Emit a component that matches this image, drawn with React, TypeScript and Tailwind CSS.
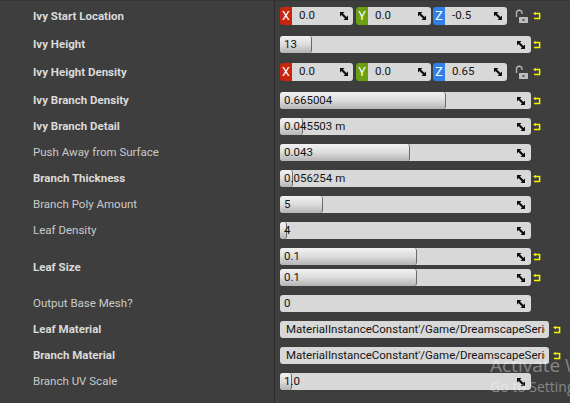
import React from "react";

const FONT = { fontFamily: "Roboto, 'Liberation Sans', sans-serif" };

function Spin() {
  return (
    <svg width="8" height="8" viewBox="0 0 8 8" className="shrink-0">
      <polygon points="0,0 4.5,0 0,4.5" fill="#0e0e0e" />
      <polygon points="8,8 3.5,8 8,3.5" fill="#0e0e0e" />
      <line x1="1" y1="1" x2="7" y2="7" stroke="#0e0e0e" strokeWidth="2.2" />
    </svg>
  );
}

function Reset() {
  return (
    <svg width="8" height="8" viewBox="0 0 8 8" className="shrink-0">
      <polygon points="0,1.5 2.8,-0.2 2.8,3.2" fill="#f5f500" />
      <path d="M2 1.5 H6.6 V6.6 H1" fill="none" stroke="#f5f500" strokeWidth="1.5" />
    </svg>
  );
}

function Lock() {
  return (
    <svg width="14" height="14" viewBox="0 0 14 14" className="shrink-0">
      <path d="M1.5 8 V4 A2.75 2.75 0 0 1 7 4 V5" fill="none" stroke="#bdbdbd" strokeWidth="1.3" />
      <rect x="4" y="8" width="9" height="6" fill="#bdbdbd" rx="0.5" />
      <rect x="7.5" y="10" width="2" height="2" fill="#555" />
    </svg>
  );
}

function Bar({ value, fill, width = 251, reset }: { value: string; fill: number; width?: number; reset?: boolean }) {
  return (
    <div className="flex items-center">
      <div
        className="relative h-[17px] rounded-[3px] bg-[#d8d8d8] overflow-hidden flex items-center"
        style={{ width }}
      >
        {fill > 0 && (
          <div
            className="absolute left-0 top-0 bottom-0 rounded-[3px] bg-gradient-to-b from-[#f2f2f2] via-[#dcdcdc] to-[#b4b4b4] border-r border-[#6a6a6a]"
            style={{ width: fill }}
          />
        )}
        <span className="relative pl-[4px] text-[11.5px] text-[#141414] leading-none">{value}</span>
        <div className="absolute right-[6px] top-[4.5px]">
          <Spin />
        </div>
      </div>
      {reset && (
        <div className="ml-[2px]">
          <Reset />
        </div>
      )}
    </div>
  );
}

function TextField({ value }: { value: string }) {
  return (
    <div className="flex items-center">
      <div className="h-[17px] w-[269px] rounded-[3px] bg-[#d8d8d8] overflow-hidden flex items-center pl-[6px] pr-[4px]">
        <span className="text-[11.5px] text-[#141414] leading-none whitespace-nowrap overflow-hidden">{value}</span>
      </div>
      <div className="ml-[4px]">
        <Reset />
      </div>
    </div>
  );
}

function Comp({ axis, color, value, width }: { axis: string; color: string; value: string; width: number }) {
  return (
    <div className="flex h-[18px]" style={{ width }}>
      <div
        className="w-[12px] h-full rounded-l-[3px] flex items-center justify-center text-[12.5px] text-white leading-none"
        style={{ backgroundColor: color }}
      >
        {axis}
      </div>
      <div className="relative flex-1 h-full rounded-r-[3px] bg-[#d8d8d8] flex items-center pl-[7px]">
        <span className="text-[11.5px] text-[#141414] leading-none">{value}</span>
        <div className="absolute right-[5px] top-[5px]">
          <Spin />
        </div>
      </div>
    </div>
  );
}

function Vector({ x, y, z }: { x: string; y: string; z: string }) {
  return (
    <div className="flex items-center">
      <Comp axis="X" color="#c9250c" value={x} width={73} />
      <div className="w-[3px]" />
      <Comp axis="Y" color="#6c9f12" value={y} width={75} />
      <div className="w-[2px]" />
      <Comp axis="Z" color="#2f80e8" value={z} width={74} />
      <div className="ml-[8px]">
        <Lock />
      </div>
      <div className="ml-[4px]">
        <Reset />
      </div>
    </div>
  );
}

function Row({
  label,
  bold,
  h,
  top,
  children,
}: {
  label: string;
  bold?: boolean;
  h: number;
  top?: boolean;
  children: React.ReactNode;
}) {
  return (
    <div className="flex" style={{ height: h }}>
      <div className="w-[275px] border-r border-[#2c2c2c] flex items-center pl-[33px] pt-[2px] shrink-0">
        <span
          className={
            bold
              ? "text-[11.5px] font-bold text-[#dadada] whitespace-nowrap"
              : "text-[11.5px] text-[#cacaca] whitespace-nowrap"
          }
        >
          {label}
        </span>
      </div>
      <div className={top ? "pl-[5px] pt-[5px] flex flex-col gap-[4px]" : "pl-[5px] flex items-center"}>{children}</div>
    </div>
  );
}

export default function App() {
  return (
    <div className="relative w-[570px] h-[403px] overflow-hidden bg-[#3e3e3e]" style={FONT}>
      <div className="border-t border-[#353535]">
        <Row label="Ivy Start Location" bold h={30}>
          <Vector x="0.0" y="0.0" z="-0.5" />
        </Row>
        <Row label="Ivy Height" bold h={26} top>
          <Bar value="13" fill={32} reset />
        </Row>
        <Row label="Ivy Height Density" bold h={30}>
          <Vector x="0.0" y="0.0" z="0.65" />
        </Row>
        <Row label="Ivy Branch Density" bold h={26} top>
          <Bar value="0.665004" fill={166} reset />
        </Row>
        <Row label="Ivy Branch Detail" bold h={26} top>
          <Bar value="0.045503 m" fill={23} reset />
        </Row>
        <Row label="Push Away from Surface" h={26} top>
          <Bar value="0.043" fill={130} />
        </Row>
        <Row label="Branch Thickness" bold h={26} top>
          <Bar value="0.056254 m" fill={13} reset />
        </Row>
        <Row label="Branch Poly Amount" h={26} top>
          <Bar value="5" fill={43} />
        </Row>
        <Row label="Leaf Density" h={26} top>
          <Bar value="4" fill={7} />
        </Row>
        <Row label="Leaf Size" bold h={47} top>
          <Bar value="0.1" fill={137} reset />
          <Bar value="0.1" fill={137} reset />
        </Row>
        <Row label="Output Base Mesh?" h={26} top>
          <Bar value="0" fill={0} />
        </Row>
        <Row label="Leaf Material" bold h={26} top>
          <TextField value="MaterialInstanceConstant'/Game/DreamscapeSeries/Materials/Ivy" />
        </Row>
        <Row label="Branch Material" bold h={26} top>
          <TextField value="MaterialInstanceConstant'/Game/DreamscapeSeries/Materials/Branch" />
        </Row>
        <Row label="Branch UV Scale" h={26} top>
          <Bar value="1.0" fill={12} />
        </Row>
        <div className="flex h-[9px]">
          <div className="w-[275px] border-r border-[#2c2c2c]" />
        </div>
      </div>
      <div
        className="absolute left-[490px] top-[352px] whitespace-nowrap text-[rgba(255,255,255,0.38)] pointer-events-none"
        style={{ fontFamily: "'Open Sans', 'Noto Sans', sans-serif" }}
      >
        <div className="text-[19px] leading-[26px]">Activate Windows</div>
        <div className="text-[14px] leading-[18px]">Go to Settings to activate Windows.</div>
      </div>
    </div>
  );
}
